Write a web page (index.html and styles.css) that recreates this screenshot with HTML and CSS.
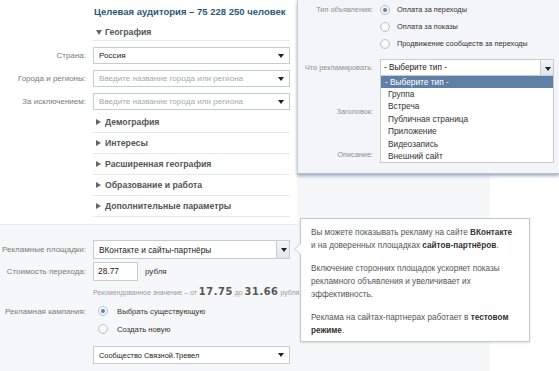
FILE: index.html
```html
<!DOCTYPE html>
<html lang="ru">
<head>
<meta charset="utf-8">
<title>Реклама</title>
<link rel="stylesheet" href="styles.css">
</head>
<body>
<div class="page">
  <div class="canvas">
    <section class="targeting">
      <div class="aud">Целевая аудитория – 75 228 250 человек</div>
      <div class="sec open"><span class="tri-down"></span>География</div>
      <div class="form geo">
        <div class="lbl">Страна:</div>
        <div class="sel"><span class="val">Россия</span><span class="arr"></span></div>
        <div class="lbl">Города и регионы:</div>
        <div class="sel"><span class="ph">Введите название города или региона</span><span class="arr"></span></div>
        <div class="lbl">За исключением:</div>
        <div class="sel"><span class="ph">Введите название города или региона</span><span class="arr"></span></div>
      </div>
      <div class="sections">
        <div class="sec"><span class="tri-right"></span>Демография</div>
        <div class="sec"><span class="tri-right"></span>Интересы</div>
        <div class="sec"><span class="tri-right"></span>Расширенная география</div>
        <div class="sec"><span class="tri-right"></span>Образование и работа</div>
        <div class="sec"><span class="tri-right"></span>Дополнительные параметры</div>
      </div>
    </section>
    <section class="bidding">
      <div class="brow">
        <div class="lbl">Рекламные площадки:</div>
        <div class="sel tall"><span class="val">ВКонтакте и сайты-партнёры</span><span class="btn"><span class="arr"></span></span></div>
      </div>
      <div class="brow r-price">
        <div class="lbl">Стоимость перехода:</div>
        <div class="price"><span class="inp">28.77</span><span class="unit">рубля</span></div>
      </div>
      <div class="brow r-rec">
        <div class="lbl"></div>
        <div class="rec">Рекомендованное значение – от <b>17.75</b> до <b>31.66</b> рубля</div>
      </div>
      <div class="brow r-camp">
        <div class="lbl">Рекламная кампания:</div>
        <div class="radio-row"><span class="radio on"></span>Выбрать существующую</div>
      </div>
      <div class="brow r-new">
        <div class="lbl"></div>
        <div class="radio-row"><span class="radio"></span>Создать новую</div>
      </div>
      <div class="brow r-sel">
        <div class="lbl"></div>
        <div class="sel camp"><span class="val">Сообщество Связной.Тревел</span><span class="arr"></span></div>
      </div>
    </section>
  </div>

  <div class="panel">
    <div class="pform">
      <div class="plbl">Тип объявления:</div>
      <div class="pradios">
        <div class="radio-row"><span class="radio on"></span>Оплата за переходы</div>
        <div class="radio-row"><span class="radio"></span>Оплата за показы</div>
        <div class="radio-row"><span class="radio"></span>Продвижение сообществ за переходы</div>
      </div>
      <div class="plbl what">Что рекламировать:</div>
      <div class="psel">
        <div class="sel wide"><span class="val">- Выберите тип -</span><span class="btn"><span class="arr"></span></span></div>
        <ul class="list">
          <li class="hl">- Выберите тип -</li>
          <li>Группа</li>
          <li>Встреча</li>
          <li>Публичная страница</li>
          <li>Приложение</li>
          <li>Видеозапись</li>
          <li>Внешний сайт</li>
        </ul>
      </div>
      <div class="plbl title">Заголовок:</div>
      <div></div>
      <div class="plbl desc">Описание:</div>
      <div></div>
    </div>
  </div>

  <div class="tooltip">
    <p>Вы можете показывать рекламу на сайте <b>ВКонтакте</b><br>и на доверенных площадках <b>сайтов-партнёров</b>.</p>
    <p>Включение сторонних площадок ускоряет показы<br>рекламного объявления и увеличивает их<br>эффективность.</p>
    <p>Реклама на сайтах-партнерах работает в <b>тестовом<br>режиме</b>.</p>
  </div>
</div>
</body>
</html>
```

FILE: styles.css
```css
* { box-sizing: border-box; }
html, body { margin: 0; padding: 0; }
body {
  width: 559px;
  height: 371px;
  overflow: hidden;
  background: #ffffff;
  font-family: "Liberation Sans", Arial, sans-serif;
  font-size: 8px;
  color: #222;
}
.page { position: relative; width: 559px; height: 371px; }
.canvas { width: 490px; height: 371px; background: #f6f7f9; }

/* ---------- targeting ---------- */
.targeting {
  width: 297px;
  height: 225px;
  background: #fff;
  border-bottom: 1px solid #e6e9ec;
  padding-top: 5px;
}
.aud {
  height: 14px;
  line-height: 14px;
  padding-left: 94px;
  font-weight: bold;
  color: #2b587a;
  font-size: 9.5px;
}
.sec {
  margin-left: 93px;
  width: 197px;
  height: 21px;
  border-bottom: 1px solid #e6e9ec;
  font-weight: bold;
  font-size: 8.7px;
  color: #555;
  display: flex;
  align-items: center;
  padding-left: 3px;
}
.sec.open { margin-top: 5px; height: 17px; }
.tri-right {
  width: 0; height: 0;
  border-left: 5px solid #666;
  border-top: 3px solid transparent;
  border-bottom: 3px solid transparent;
  margin-right: 4px;
}
.tri-down {
  width: 0; height: 0;
  border-top: 5px solid #666;
  border-left: 3px solid transparent;
  border-right: 3px solid transparent;
  margin-right: 3px;
}
.sections { margin-top: 2px; }

.form {
  display: grid;
  grid-template-columns: 86px 197px;
  column-gap: 7px;
  row-gap: 6px;
  align-items: center;
}
.geo { margin-top: 6px; }
.lbl {
  text-align: right;
  color: #7a7a7a;
  white-space: nowrap;
}
.sel {
  position: relative;
  height: 17px;
  border: 1px solid #c5ccd4;
  background: #fff;
  display: flex;
  align-items: center;
  padding-left: 5px;
  white-space: nowrap;
  overflow: hidden;
  font-size: 8.1px;
}
.sel .val { color: #222; }
.sel .ph { color: #a8a8a8; }
.arr {
  position: absolute;
  right: 5px;
  top: 6px;
  width: 0; height: 0;
  border-top: 4px solid #222;
  border-left: 3.5px solid transparent;
  border-right: 3.5px solid transparent;
}
.btn {
  position: absolute;
  right: 0; top: 0; bottom: 0;
  width: 13px;
  border-left: 1px solid #c5ccd4;
  background: linear-gradient(#f3f5f7, #e2e6ea);
}
.btn .arr { right: 2.5px; top: 7px; }

/* ---------- bidding ---------- */
.bidding { padding-top: 15px; }
.brow {
  display: grid;
  grid-template-columns: 86px 197px;
  column-gap: 7px;
  align-items: center;
}
.sel.tall { height: 19px; font-size: 8.3px; }
.r-price { margin-top: 3px; }
.price { display: flex; align-items: center; height: 19px; }
.inp {
  width: 45px; height: 19px;
  border: 1px solid #c5ccd4;
  background: #fff;
  padding-left: 4px;
  line-height: 17px;
  font-size: 8.4px;
}
.unit { margin-left: 7px; color: #333; }
.r-rec { margin-top: 4px; height: 13px; }
.rec {
  color: #9a9a9a;
  white-space: nowrap;
  font-size: 6.9px;
  line-height: 13px;
}
.rec b {
  color: #555;
  font-family: "DejaVu Sans", sans-serif;
  font-size: 9.8px;
  letter-spacing: 0.6px;
}
.r-camp { margin-top: 6px; height: 14px; }
.r-new { margin-top: 4px; height: 14px; }
.r-sel { margin-top: 10px; }
.radio-row {
  display: flex;
  align-items: center;
  height: 14px;
  color: #333;
  white-space: nowrap;
  font-size: 7.7px;
}
.brow .radio-row { padding-left: 5px; }
.radio {
  width: 10px; height: 10px;
  border-radius: 50%;
  border: 1px solid #bcc4cd;
  background: radial-gradient(circle at 50% 35%, #ffffff, #e9edf1);
  margin-right: 9px;
  position: relative;
  flex: none;
}
.radio.on::after {
  content: "";
  position: absolute;
  left: 2px; top: 2px;
  width: 4px; height: 4px;
  border-radius: 50%;
  background: #5a7ea8;
}
.sel.camp { height: 18px; font-size: 7.4px; }

/* ---------- panel ---------- */
.panel {
  position: absolute;
  left: 297px;
  top: 0;
  width: 262px;
  height: 174px;
  background: #f3f5f8;
  border-left: 1px solid #c8cdd4;
  border-bottom: 1px solid #b2bfcf;
  box-shadow: 0 2px 3px rgba(70, 100, 140, 0.5);
}
.pform {
  display: grid;
  grid-template-columns: 75px 174px;
  column-gap: 7px;
  padding-top: 1px;
}
.plbl {
  text-align: right;
  color: #8f8f8f;
  white-space: nowrap;
  line-height: 17px;
  height: 17px;
  font-size: 7.3px;
}
.pradios { display: flex; flex-direction: column; }
.pform .radio-row { height: 17px; font-size: 7.35px; }
.pform .radio { margin-right: 7px; }
.what { margin-top: 7px; }
.psel { margin-top: 7px; position: relative; }
.sel.wide { height: 17px; padding-left: 3px; font-size: 8.2px; }
.list {
  position: absolute;
  left: 0; top: 16px;
  width: 174px;
  margin: 0;
  padding: 0;
  list-style: none;
  background: #fff;
  border: 1px solid #c5ccd4;
  z-index: 2;
  font-size: 8.3px;
}
.list li {
  height: 12.4px;
  line-height: 12.4px;
  padding-left: 7px;
  color: #333;
}
.list li.hl {
  background: #5f7fa6;
  color: #fff;
  height: 12px;
  line-height: 12px;
  padding-left: 4px;
}
.title { margin-top: 27px; }
.desc { margin-top: 26px; }

/* ---------- tooltip ---------- */
.tooltip {
  position: absolute;
  left: 300px;
  top: 218px;
  width: 230px;
  height: 124px;
  background: #fff;
  border: 1px solid #c3c8ce;
  box-shadow: 0 1px 2px rgba(0, 0, 0, 0.12);
  padding: 7px 0 0 10px;
  color: #555;
  font-size: 8.2px;
}
.tooltip::before, .tooltip::after {
  content: "";
  position: absolute;
  width: 0; height: 0;
  border-top: 6px solid transparent;
  border-bottom: 6px solid transparent;
}
.tooltip::before { left: -7px; top: 24px; border-right: 7px solid #c3c8ce; }
.tooltip::after { left: -6px; top: 24px; border-right: 7px solid #fff; }
.tooltip p { margin: 0 0 10px 0; line-height: 13px; }
.tooltip b { color: #333; }
```
